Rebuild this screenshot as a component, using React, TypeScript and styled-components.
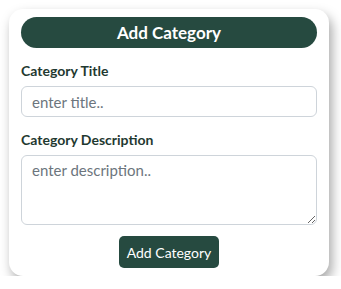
import React, { useState } from "react";
import styled, { createGlobalStyle } from "styled-components";

const GlobalStyle = createGlobalStyle`
  body {
    margin: 0;
    background: #ffffff;
    font-family: Lato, "Liberation Sans", sans-serif;
  }
`;

function App() {
  const [title, setTitle] = useState("");
  const [description, setDescription] = useState("");

  const handleSubmit = (e: React.FormEvent) => {
    e.preventDefault();
  };

  return (
    <>
      <GlobalStyle />
      <Page>
        <Card onSubmit={handleSubmit}>
          <Header>Add Category</Header>
          <Field>
            <Label htmlFor="title">Category Title</Label>
            <Input
              id="title"
              placeholder="enter title.."
              value={title}
              onChange={(e) => setTitle(e.target.value)}
            />
          </Field>
          <Field>
            <Label htmlFor="description">Category Description</Label>
            <TextArea
              id="description"
              placeholder="enter description.."
              value={description}
              onChange={(e) => setDescription(e.target.value)}
            />
          </Field>
          <Actions>
            <Button type="submit">Add Category</Button>
          </Actions>
        </Card>
      </Page>
    </>
  );
}

export default App;

const Page = styled.div`
  padding: 9px 12px 0 9px;
`;

const Card = styled.form`
  width: 320px;
  box-sizing: border-box;
  padding: 8px 12px 8px 12px;
  background: #ffffff;
  border-radius: 14px;
  box-shadow: 3px 6px 12px rgba(0, 0, 0, 0.35);
  display: flex;
  flex-direction: column;
`;

const Header = styled.div`
  height: 31px;
  border-radius: 16px;
  background: #264a40;
  color: #ffffff;
  font-weight: 700;
  font-size: 17px;
  display: flex;
  align-items: center;
  justify-content: center;
  margin-bottom: 13px;
`;

const Field = styled.div`
  display: flex;
  flex-direction: column;
  margin-bottom: 13px;
`;

const Label = styled.label`
  font-size: 14px;
  font-weight: 700;
  line-height: 20px;
  color: #1f3931;
  margin-bottom: 5px;
`;

const Input = styled.input`
  height: 31px;
  box-sizing: border-box;
  border: 1px solid #ced4da;
  border-radius: 6px;
  padding: 0 10px;
  font-family: Lato, "Liberation Sans", sans-serif;
  font-size: 15px;
  color: #212529;
  outline: none;

  &::placeholder {
    color: #6c757d;
  }
`;

const TextArea = styled.textarea`
  height: 70px;
  box-sizing: border-box;
  border: 1px solid #ced4da;
  border-radius: 6px;
  padding: 5px 10px;
  font-family: Lato, "Liberation Sans", sans-serif;
  font-size: 15px;
  color: #212529;
  outline: none;

  &::placeholder {
    color: #6c757d;
  }
`;

const Actions = styled.div`
  display: flex;
  justify-content: center;
  margin-top: -2px;
`;

const Button = styled.button`
  width: 100px;
  height: 32px;
  border: none;
  border-radius: 5px;
  background: #264a40;
  color: #ffffff;
  font-family: Lato, "Liberation Sans", sans-serif;
  font-size: 14px;
  cursor: pointer;
`;
